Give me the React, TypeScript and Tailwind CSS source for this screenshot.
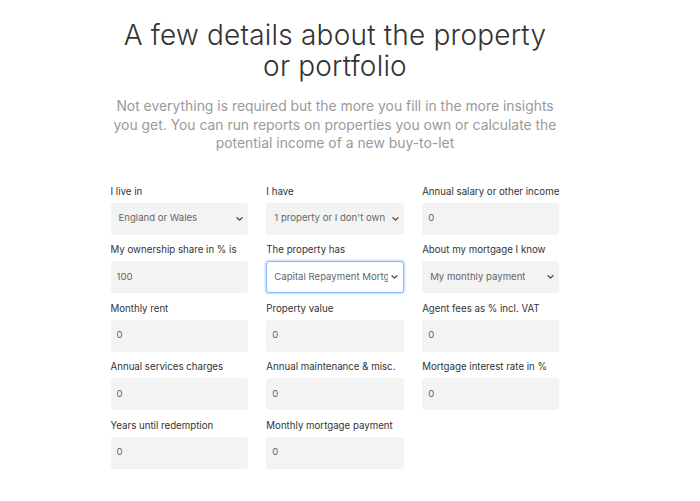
import React from "react";

const font = { fontFamily: "Inter, 'Noto Sans', sans-serif" };

function Chevron() {
  return (
    <svg className="pointer-events-none absolute right-[5px] top-1/2 -translate-y-1/2" width="7" height="5" viewBox="0 0 7 5" fill="none">
      <path d="M1 1.2 L3.5 3.6 L6 1.2" stroke="#444" strokeWidth="1.2" strokeLinecap="round" strokeLinejoin="round" />
    </svg>
  );
}

type Field = { label: string; value: string; select?: boolean; focused?: boolean };

const fields: Field[] = [
  { label: "I live in", value: "England or Wales", select: true },
  { label: "I have", value: "1 property or I don't own", select: true },
  { label: "Annual salary or other income", value: "0" },
  { label: "My ownership share in % is", value: "100" },
  { label: "The property has", value: "Capital Repayment Mortgage", select: true, focused: true },
  { label: "About my mortgage I know", value: "My monthly payment", select: true },
  { label: "Monthly rent", value: "0" },
  { label: "Property value", value: "0" },
  { label: "Agent fees as % incl. VAT", value: "0" },
  { label: "Annual services charges", value: "0" },
  { label: "Annual maintenance & misc.", value: "0" },
  { label: "Mortgage interest rate in %", value: "0" },
  { label: "Years until redemption", value: "0" },
  { label: "Monthly mortgage payment", value: "0" },
];

function FieldBox({ f }: { f: Field }) {
  return (
    <div className="flex flex-col">
      <div className="h-[16px] text-[9.7px] leading-[16px] text-[#333] whitespace-nowrap">{f.label}</div>
      <div
        className={
          "relative mt-[3px] flex h-[32px] items-center rounded-[3px] " +
          (f.focused
            ? "border border-[#86b7fe] bg-white shadow-[0_0_0_1.5px_rgba(134,183,254,0.35)]"
            : "bg-[#f3f3f3]") +
          (f.select ? (f.focused ? " pl-[7px] pr-[15px]" : " pl-[8px] pr-[15px]") : " pl-[6px]")
        }
      >
        <span className="block min-w-0 overflow-hidden whitespace-nowrap text-[9.6px] text-[#666]">
          {f.value}
        </span>
        {f.select && <Chevron />}
      </div>
    </div>
  );
}

export default function App() {
  return (
    <div className="min-h-[501px] w-[700px] bg-white" style={font}>
      <div className="flex w-[670px] flex-col items-center pt-[20px]">
        <h1 className="text-center text-[28px] font-light leading-[31px] text-[#333] tracking-[0.2px]">
          A few details about the property
          <br />
          or portfolio
        </h1>
        <p className="mt-[15px] w-[452px] text-center text-[13.9px] leading-[18.5px] text-[#9a9a9a]">
          Not everything is required but the more you fill in the more insights you get. You can run reports on properties you own or calculate the potential income of a new buy-to-let
        </p>
        <div className="mt-[31px] grid w-[449px] grid-cols-3 gap-x-[18.5px] gap-y-[7.5px]">
          {fields.map((f, i) => (
            <FieldBox key={i} f={f} />
          ))}
        </div>
      </div>
    </div>
  );
}
